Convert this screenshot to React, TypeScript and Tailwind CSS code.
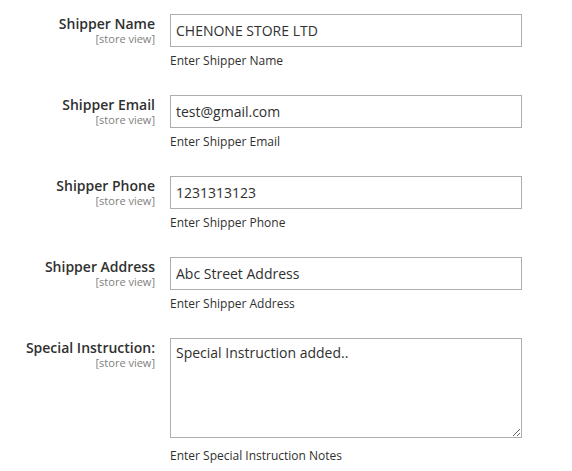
import React from 'react';

const fields = [
  { label: 'Shipper Name', value: 'CHENONE STORE LTD', note: 'Enter Shipper Name' },
  { label: 'Shipper Email', value: 'test@gmail.com', note: 'Enter Shipper Email' },
  { label: 'Shipper Phone', value: '1231313123', note: 'Enter Shipper Phone' },
  { label: 'Shipper Address', value: 'Abc Street Address', note: 'Enter Shipper Address' },
];

function Label({ text }: { text: string }) {
  return (
    <div className="w-[155px] shrink-0 text-right pt-[1px]">
      <span className="block text-[14px] leading-[18px] font-semibold text-[#303030]">{text}</span>
      <span className="block text-[11px] leading-[12px] text-[#808080]">[store view]</span>
    </div>
  );
}

export default function App() {
  return (
    <div className="min-h-screen bg-white text-[#303030]" style={{ fontFamily: '"Open Sans", "Liberation Sans", sans-serif' }}>
      <div className="flex flex-col gap-[25px] pt-[14px]">
        {fields.map((f) => (
          <div key={f.label} className="flex gap-[15px]">
            <Label text={f.label} />
            <div className="w-[352px]">
              <input
                type="text"
                readOnly
                value={f.value}
                className="block w-full h-[33px] border border-[#adadad] bg-white px-[5px] text-[14px] text-[#303030] outline-none"
              />
              <div className="mt-[5px] text-[12px] leading-[18px] text-[#303030]">{f.note}</div>
            </div>
          </div>
        ))}

        {/* special instruction */}
        <div className="flex gap-[15px]">
          <Label text="Special Instruction:" />
          <div className="w-[352px]">
            <textarea
              readOnly
              value="Special Instruction added.."
              className="block w-full h-[100px] border border-[#adadad] bg-white px-[5px] py-[4px] text-[14px] leading-[19px] text-[#303030] outline-none resize-y"
            />
            <div className="mt-[9px] text-[12px] leading-[18px] text-[#303030]">Enter Special Instruction Notes</div>
          </div>
        </div>
      </div>
    </div>
  );
}
